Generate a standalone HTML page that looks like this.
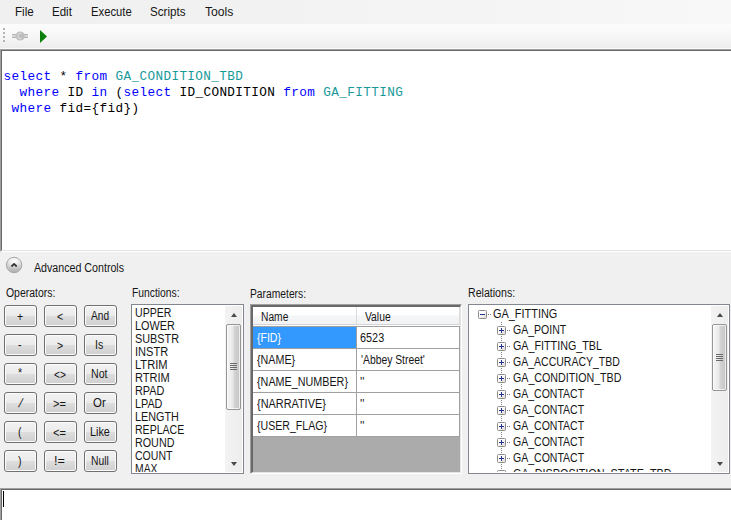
<!DOCTYPE html>
<html lang="en"><head><meta charset="utf-8"><title>Query Builder</title>
<style>
*{box-sizing:border-box;margin:0;padding:0}
html,body{width:731px;height:520px;overflow:hidden;background:#f0f0f0}
body{position:relative;font-family:"Liberation Sans",sans-serif;font-size:12px;color:#000}
.abs{position:absolute}
.tx{color:#161616;position:absolute;font-size:12px;line-height:14px;white-space:nowrap;transform-origin:0 0;display:block}
#menubar{left:0;top:0;width:731px;height:24px;background:linear-gradient(to right,#f0f0f0 0%,#f1f1f1 30%,#f8f8f8 100%)}
#toolbar{left:0;top:24px;width:731px;height:25px;background:linear-gradient(to bottom,#fcfcfc 0%,#f7f7f7 50%,#ececec 100%);border-bottom:1px solid #fafafa}
#editor{left:0;top:49px;width:740px;height:203px;background:#fff;border:1px solid;border-color:#a0a0a0 #fff #fff #a0a0a0}
#editor .in{position:absolute;left:0;top:0;right:0;bottom:0;border:1px solid;border-color:#696969 #e3e3e3 #e3e3e3 #696969}
#editor pre{position:absolute;left:2.5px;top:19px;font-family:"Liberation Mono",monospace;font-size:12.7px;letter-spacing:0.379px;line-height:16px;color:#000}
.k{color:#0000ff}.t{color:#189a9a}
.btn{position:absolute;width:33px;height:22px;border:1px solid #707070;border-radius:3px;background:linear-gradient(to bottom,#f2f2f2 0%,#ebebeb 48%,#dddddd 52%,#cfcfcf 100%);box-shadow:inset 0 0 0 1px #fcfcfc}
.box{position:absolute;background:#fff;border:1px solid #828790;overflow:hidden}
.sb{position:absolute;top:1px;right:1px;bottom:1px;width:17px;background:linear-gradient(to right,#f3f3f3,#ededed)}
.box::after{content:"";position:absolute;left:0;top:0;right:0;bottom:0;border:1px solid #fff;pointer-events:none}
.thumb{position:absolute;left:1px;width:15px;border:1px solid #959595;border-radius:2px;background:linear-gradient(to right,#f5f5f5 0%,#e9e9e9 45%,#d4d4d4 55%,#c4c4c4 100%);box-shadow:inset 0 0 0 1px rgba(255,255,255,.7)}
.grip{position:absolute;left:3px;width:7px;height:7px;top:50%;margin-top:-4px;background:repeating-linear-gradient(to bottom,#6a6a6a 0,#6a6a6a 1px,transparent 1px,transparent 2px)}
.arr{position:absolute;left:5.6px;width:0;height:0;border-left:3.8px solid transparent;border-right:3.8px solid transparent}
.arr.up{border-bottom:4px solid #4a4a4a}
.arr.dn{border-top:4px solid #4a4a4a}
#grid{position:absolute;left:250px;top:304px;width:212px;height:170px;background:#ababab;border:1px solid;border-color:#a0a0a0 #fff #fff #a0a0a0}
#grid .in{position:absolute;left:0;top:0;width:210px;height:168px;border-style:solid;border-width:2px 1px 1px 2px;border-color:#696969 #e3e3e3 #e3e3e3 #696969;overflow:hidden}
.hd{position:absolute;top:0;height:18px;background:linear-gradient(to bottom,#fff 0%,#fff 45%,#f4f5f7 55%,#f2f3f5 100%);border-right:1px solid #dcdcdc;border-bottom:1px solid #d5d5d5}
.cell{position:absolute;height:22px;background:#fff;border-right:1px solid #a0a0a0;border-bottom:1px solid #a0a0a0}
.cell.sel{background:#3399ff}
.eb{position:absolute;width:9px;height:9px;border:1px solid #8c8c8c;border-radius:1.5px;background:linear-gradient(135deg,#fff 0%,#fff 40%,#d9d6cf 100%)}
.eb i{position:absolute;left:1px;top:3px;width:5px;height:1px;background:#26348b}
.eb b{position:absolute;left:3px;top:1px;width:1px;height:5px;background:#26348b}
.hdot{position:absolute;height:1px;width:4px;background:repeating-linear-gradient(to right,#808080 0,#808080 1px,transparent 1px,transparent 2px)}
.vdot{position:absolute;width:1px;background:repeating-linear-gradient(to bottom,#808080 0,#808080 1px,transparent 1px,transparent 2px)}
#cmd{left:0;top:488px;width:740px;height:40px;background:#fff;border:1px solid;border-color:#a0a0a0 #fff #fff #a0a0a0}
#cmd .in{position:absolute;left:0;top:0;right:0;bottom:0;border:1px solid;border-color:#696969 #e3e3e3 #e3e3e3 #696969}
.hdbg{position:absolute;left:0;top:0;width:207px;height:20px;background:#fff}
</style></head><body>
<div id="menubar" class="abs">
<div class="tx mi" style="left:15px;top:5px;transform:scaleX(0.9675)">File</div>
<div class="tx mi" style="left:52px;top:5px;transform:scaleX(0.9615)">Edit</div>
<div class="tx mi" style="left:91px;top:5px;transform:scaleX(0.9385)">Execute</div>
<div class="tx mi" style="left:150px;top:5px;transform:scaleX(0.9676)">Scripts</div>
<div class="tx mi" style="left:205px;top:5px;transform:scaleX(1.0140)">Tools</div>
</div>
<div id="toolbar" class="abs">
<svg class="abs" style="left:0;top:0" width="60" height="25" viewBox="0 0 60 25">
<g fill="#b4b4b4"><rect x="3" y="4" width="2" height="2"/><rect x="3" y="8" width="2" height="2"/><rect x="3" y="12" width="2" height="2"/><rect x="3" y="16" width="2" height="2"/></g>
<rect x="12" y="10" width="16" height="4" fill="#d9d9d9"/>
<rect x="12" y="10" width="16" height="1" fill="#b3b3b3"/><rect x="12" y="13" width="16" height="1" fill="#b3b3b3"/>
<circle cx="20.2" cy="12" r="4.6" fill="#bdbdbd"/>
<path d="M21.8 9.8 A2.6 2.6 0 1 0 21.8 14.2" fill="none" stroke="#d6d6d6" stroke-width="1.4"/>
<path d="M40 6 L47 12.5 L40 19 Z" fill="#0b800b"/>
</svg>
</div>
<div id="editor" class="abs"><div class="in"></div><pre><span class="k">select</span> * <span class="k">from</span> <span class="t">GA_CONDITION_TBD</span>
  <span class="k">where</span> ID <span class="k">in</span> (<span class="k">select</span> ID_CONDITION <span class="k">from</span> <span class="t">GA_FITTING</span>
 <span class="k">where</span> fid={fid})</pre></div>

<svg class="abs" style="left:4px;top:255px" width="20" height="20" viewBox="0 0 20 20">
<defs><linearGradient id="cg" x1="0" y1="0" x2="0" y2="1"><stop offset="0" stop-color="#f0f0f0"/><stop offset="0.45" stop-color="#d8d8d8"/><stop offset="1" stop-color="#adadad"/></linearGradient>
<radialGradient id="ch" cx="0.5" cy="0.25" r="0.5"><stop offset="0" stop-color="#fff" stop-opacity="0.9"/><stop offset="1" stop-color="#fff" stop-opacity="0"/></radialGradient></defs>
<circle cx="10.1" cy="10" r="7.7" fill="url(#cg)" stroke="#a6a6a6" stroke-width="1"/>
<circle cx="10.1" cy="10" r="7" fill="url(#ch)"/>
<path d="M7.5 11.5 L10.1 8.9 L12.7 11.5" fill="none" stroke="#343434" stroke-width="1.8" stroke-linejoin="round"/>
</svg>

<div class="tx" style="left:34px;top:261px;transform:scaleX(0.8882)">Advanced Controls</div>
<div class="tx" style="left:6px;top:286px;transform:scaleX(0.8704)">Operators:</div>
<div class="tx" style="left:132px;top:286px;transform:scaleX(0.8586)">Functions:</div>
<div class="tx" style="left:250px;top:287px;transform:scaleX(0.8573)">Parameters:</div>
<div class="tx" style="left:468px;top:286px;transform:scaleX(0.8837)">Relations:</div>

<div class="btn" style="left:4px;top:305px"><span class="tx" style="left:12px;top:4px;transform:scaleX(0.8800)">+</span></div>
<div class="btn" style="left:44px;top:305px"><span class="tx" style="left:12px;top:4px;transform:scaleX(0.8800)">&lt;</span></div>
<div class="btn" style="left:84px;top:305px"><span class="tx" style="left:6px;top:3px;transform:scaleX(0.8484)">And</span></div>
<div class="btn" style="left:4px;top:334px"><span class="tx" style="left:13px;top:3px;transform:scaleX(0.8800)">-</span></div>
<div class="btn" style="left:44px;top:334px"><span class="tx" style="left:12px;top:4px;transform:scaleX(0.8800)">&gt;</span></div>
<div class="btn" style="left:84px;top:334px"><span class="tx" style="left:10px;top:3px;transform:scaleX(0.8808)">Is</span></div>
<div class="btn" style="left:4px;top:363px"><span class="tx" style="left:13px;top:2px;transform:scaleX(0.8800)">*</span></div>
<div class="btn" style="left:44px;top:363px"><span class="tx" style="left:9px;top:4px;transform:scaleX(0.8522)">&lt;&gt;</span></div>
<div class="btn" style="left:84px;top:363px"><span class="tx" style="left:6px;top:3px;transform:scaleX(0.8844)">Not</span></div>
<div class="btn" style="left:4px;top:392px"><span class="tx" style="left:14px;top:3px;transform:skewX(-15deg);transform-origin:50% 50%">/</span></div>
<div class="btn" style="left:44px;top:392px"><span class="tx" style="left:8px;top:4px;transform:scaleX(0.9297)">&gt;=</span></div>
<div class="btn" style="left:84px;top:392px"><span class="tx" style="left:8px;top:3px;transform:scaleX(0.9536)">Or</span></div>
<div class="btn" style="left:4px;top:421px"><span class="tx" style="left:13px;top:3px;transform:scaleX(0.8800)">(</span></div>
<div class="btn" style="left:44px;top:421px"><span class="tx" style="left:8px;top:4px;transform:scaleX(0.9297)">&lt;=</span></div>
<div class="btn" style="left:84px;top:421px"><span class="tx" style="left:5px;top:3px;transform:scaleX(0.9007)">Like</span></div>
<div class="btn" style="left:4px;top:450px"><span class="tx" style="left:13px;top:3px;transform:scaleX(0.8800)">)</span></div>
<div class="btn" style="left:44px;top:450px"><span class="tx" style="left:9px;top:3px;transform:scaleX(1.0534)">!=</span></div>
<div class="btn" style="left:84px;top:450px"><span class="tx" style="left:6px;top:3px;transform:scaleX(0.8599)">Null</span></div>

<div id="fl" class="box" style="left:131px;top:304px;width:113px;height:170px">
<div class="tx it" style="left:3px;top:1px;transform:scaleX(0.8818)">UPPER</div>
<div class="tx it" style="left:3px;top:14px;transform:scaleX(0.9037)">LOWER</div>
<div class="tx it" style="left:3px;top:27px;transform:scaleX(0.9033)">SUBSTR</div>
<div class="tx it" style="left:3px;top:40px;transform:scaleX(0.9215)">INSTR</div>
<div class="tx it" style="left:3px;top:53px;transform:scaleX(0.9279)">LTRIM</div>
<div class="tx it" style="left:3px;top:66px;transform:scaleX(0.9205)">RTRIM</div>
<div class="tx it" style="left:3px;top:79px;transform:scaleX(0.9064)">RPAD</div>
<div class="tx it" style="left:3px;top:92px;transform:scaleX(0.8999)">LPAD</div>
<div class="tx it" style="left:3px;top:105px;transform:scaleX(0.9013)">LENGTH</div>
<div class="tx it" style="left:3px;top:118px;transform:scaleX(0.8790)">REPLACE</div>
<div class="tx it" style="left:3px;top:131px;transform:scaleX(0.8957)">ROUND</div>
<div class="tx it" style="left:3px;top:144px;transform:scaleX(0.8767)">COUNT</div>
<div class="tx it" style="left:3px;top:157px;transform:scaleX(0.8643)">MAX</div>
<div class="sb"><div class="arr up" style="top:7px"></div><div class="thumb" style="top:18px;height:86px"><div class="grip"></div></div><div class="arr dn" style="top:156px"></div></div>
</div>

<div id="grid"><div class="in">
<div class="hdbg"></div>
<div class="hd" style="left:0;width:104px"><span class="tx" style="left:8px;top:3px;transform:scaleX(0.8543)">Name</span></div>
<div class="hd" style="left:104px;width:103px"><span class="tx" style="left:8px;top:3px;transform:scaleX(0.8607)">Value</span></div>
<div class="cell sel" style="left:0;top:19px;width:104px;height:23px;border-top:1px solid #a0a0a0"><span class="tx" style="left:4px;top:4px;transform:scaleX(0.8770);color:#fff">{FID}</span></div>
<div class="cell" style="left:104px;top:19px;width:103px;height:23px;border-top:1px solid #a0a0a0"><span class="tx" style="left:3px;top:4px;transform:scaleX(0.9056)">6523</span></div>
<div class="cell" style="left:0;top:42px;width:104px;height:22px"><span class="tx" style="left:4px;top:4px;transform:scaleX(0.8946)">{NAME}</span></div>
<div class="cell" style="left:104px;top:42px;width:103px;height:22px"><span class="tx" style="left:4px;top:4px;transform:scaleX(0.8628)">'Abbey Street'</span></div>
<div class="cell" style="left:0;top:64px;width:104px;height:22px"><span class="tx" style="left:4px;top:4px;transform:scaleX(0.8976)">{NAME_NUMBER}</span></div>
<div class="cell" style="left:104px;top:64px;width:103px;height:22px"><span class="tx" style="left:3px;top:4px;transform:scaleX(0.9521)">''</span></div>
<div class="cell" style="left:0;top:86px;width:104px;height:22px"><span class="tx" style="left:4px;top:4px;transform:scaleX(0.9075)">{NARRATIVE}</span></div>
<div class="cell" style="left:104px;top:86px;width:103px;height:22px"><span class="tx" style="left:3px;top:4px;transform:scaleX(0.9521)">''</span></div>
<div class="cell" style="left:0;top:108px;width:104px;height:22px"><span class="tx" style="left:4px;top:4px;transform:scaleX(0.8817)">{USER_FLAG}</span></div>
<div class="cell" style="left:104px;top:108px;width:103px;height:22px"><span class="tx" style="left:3px;top:4px;transform:scaleX(0.9521)">''</span></div>
</div></div>

<div id="tree" class="box" style="left:468px;top:304px;width:262px;height:170px">
<div class="vdot" style="left:32px;top:17px;height:160px"></div>
<div class="eb" style="left:9px;top:5px"><i></i></div><div class="hdot" style="left:19px;top:9px"></div><div class="tx tn" style="left:24px;top:2px;transform:scaleX(0.9099)">GA_FITTING</div>
<div class="eb" style="left:28px;top:21px"><i></i><b></b></div><div class="hdot" style="left:38px;top:25px"></div><div class="tx tn" style="left:44px;top:18px;transform:scaleX(0.8768)">GA_POINT</div>
<div class="eb" style="left:28px;top:37px"><i></i><b></b></div><div class="hdot" style="left:38px;top:41px"></div><div class="tx tn" style="left:44px;top:34px;transform:scaleX(0.8952)">GA_FITTING_TBL</div>
<div class="eb" style="left:28px;top:53px"><i></i><b></b></div><div class="hdot" style="left:38px;top:57px"></div><div class="tx tn" style="left:44px;top:50px;transform:scaleX(0.8760)">GA_ACCURACY_TBD</div>
<div class="eb" style="left:28px;top:69px"><i></i><b></b></div><div class="hdot" style="left:38px;top:73px"></div><div class="tx tn" style="left:44px;top:66px;transform:scaleX(0.8884)">GA_CONDITION_TBD</div>
<div class="eb" style="left:28px;top:85px"><i></i><b></b></div><div class="hdot" style="left:38px;top:89px"></div><div class="tx tn" style="left:44px;top:82px;transform:scaleX(0.8765)">GA_CONTACT</div>
<div class="eb" style="left:28px;top:101px"><i></i><b></b></div><div class="hdot" style="left:38px;top:105px"></div><div class="tx tn" style="left:44px;top:98px;transform:scaleX(0.8765)">GA_CONTACT</div>
<div class="eb" style="left:28px;top:117px"><i></i><b></b></div><div class="hdot" style="left:38px;top:121px"></div><div class="tx tn" style="left:44px;top:114px;transform:scaleX(0.8765)">GA_CONTACT</div>
<div class="eb" style="left:28px;top:133px"><i></i><b></b></div><div class="hdot" style="left:38px;top:137px"></div><div class="tx tn" style="left:44px;top:130px;transform:scaleX(0.8765)">GA_CONTACT</div>
<div class="eb" style="left:28px;top:149px"><i></i><b></b></div><div class="hdot" style="left:38px;top:153px"></div><div class="tx tn" style="left:44px;top:146px;transform:scaleX(0.8765)">GA_CONTACT</div>
<div class="eb" style="left:28px;top:165px"><i></i><b></b></div><div class="hdot" style="left:38px;top:169px"></div><div class="tx tn" style="left:44px;top:162px;transform:scaleX(0.9033)">GA_DISPOSITION_STATE_TBD</div>
<div class="sb"><div class="arr up" style="top:7px"></div><div class="thumb" style="top:18px;height:67px"><div class="grip"></div></div><div class="arr dn" style="top:156px"></div></div>
</div>

<div id="cmd" class="abs"><div class="in"></div><div class="abs" style="left:2px;top:2px;width:1px;height:16px;background:#000"></div></div>


</body></html>
